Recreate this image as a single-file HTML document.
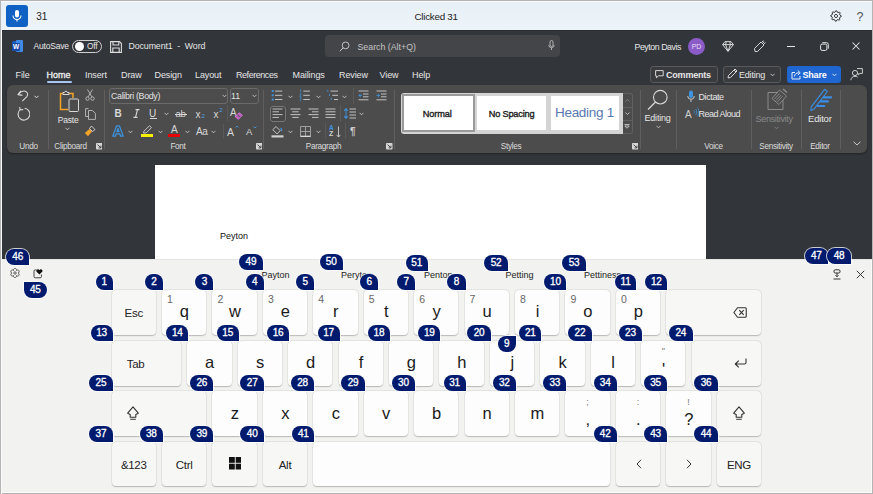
<!DOCTYPE html>
<html><head><meta charset="utf-8">
<style>
*{margin:0;padding:0;box-sizing:border-box}
html,body{width:873px;height:494px;overflow:hidden;background:#b4b4b4}
body{position:relative;font-family:"Liberation Sans",sans-serif}
.a{position:absolute;white-space:nowrap}
#topbar{position:absolute;left:1px;top:1px;width:871px;height:28.7px;background:linear-gradient(#e8f0f7,#ecf3f9);box-shadow:inset 0 1px 0 #f8fafc}
#word{position:absolute;left:2px;top:29.7px;width:869.7px;height:230px;background:#32353a;border-top:1px solid #2a2d32}
.wt{position:absolute;white-space:nowrap;color:#e6e6e6;font-size:10px;line-height:12px}
#ribbon{position:absolute;left:7px;top:85px;width:860px;height:68px;background:#4c4c4c;border-radius:6px;box-shadow:0 1px 2px rgba(0,0,0,.35)}
.sep{position:absolute;width:1px;background:#5f5f5f}
.gl{position:absolute;color:#dcdcdc;font-size:8.2px;letter-spacing:-0.3px;line-height:10px;white-space:nowrap;transform:translateX(-50%)}
.ic{position:absolute}
#page{position:absolute;left:155px;top:164.5px;width:551px;height:95px;background:#fff}
#kb{position:absolute;left:1px;top:259px;width:871px;height:234px;background:#f2f2f0;border-top:1px solid #e4e4e2;border-left:1px solid #fbfbfb;border-right:1px solid #fbfbfb;border-bottom:1px solid #fbfbfb}
#kbw{position:absolute;left:1px;top:491px;width:871px;height:1px;background:#fafafa}
.k{position:absolute;background:#fdfdfd;border-radius:4px;box-shadow:0 0.8px 1.2px rgba(0,0,0,.22), 0 0 0 0.5px rgba(0,0,0,.06)}
.k.f{background:#f7f7f6}
.k span{position:absolute;white-space:nowrap}
.fn{left:0;right:0;top:16px;text-align:center;font-size:11.5px;line-height:14px;color:#222;letter-spacing:-0.3px}
.hint{left:5px;top:3.3px;font-size:10.5px;line-height:12px;color:#666}
.hint2{left:0;right:0;top:6px;text-align:center;font-size:9px;line-height:10px;color:#777}
.let{left:0.6px;right:0;top:11.7px;text-align:center;font-size:16.5px;line-height:20px;color:#1a1a1a}
.bd{position:absolute;background:#001a6e;color:#fff;font-size:10px;-webkit-text-stroke:0.3px #fff;line-height:15px;text-align:center;border-radius:8px;box-shadow:0 0 0 1px rgba(255,255,255,.75);letter-spacing:-0.2px}
.bd.br{border-bottom-right-radius:0}
.bd.tl{border-top-left-radius:0}
.bd.tr{border-top-right-radius:0}
.sg{position:absolute;font-size:9px;line-height:10px;color:#222;white-space:nowrap}
</style></head><body>
<div class="a" style="left:1px;top:1px;width:1px;height:493px;background:#f8f9fa"></div>
<div id="topbar">
  <div class="a" style="left:5px;top:4px;width:22px;height:22px;background:#0f62c4;border-radius:3px"></div>
  <svg class="ic" style="left:9px;top:8px" width="14" height="14" viewBox="0 0 14 14"><rect x="5" y="1" width="4" height="7.5" rx="2" fill="#fff"/><path d="M3 6.5 a4 4 0 0 0 8 0 M7 10.5 V12.5" fill="none" stroke="#fff" stroke-width="1.1"/></svg>
  <div class="a" style="left:35.2px;top:9.7px;font-size:10px;line-height:12px;color:#222">31</div>
  <div class="a" style="left:413.5px;top:10px;font-size:9.8px;line-height:12px;color:#222;letter-spacing:-0.25px">Clicked 31</div>
  <svg class="ic" style="left:829px;top:9px" width="12" height="12" viewBox="0 0 12 12"><circle cx="6" cy="6" r="1.6" fill="none" stroke="#444" stroke-width="1"/><path d="M5.74 0.81 L6.76 0.86 L7.35 2.23 L8.06 2.57 L9.49 2.15 L10.18 2.90 L9.62 4.29 L9.88 5.03 L11.19 5.74 L11.14 6.76 L9.77 7.35 L9.43 8.06 L9.85 9.49 L9.10 10.18 L7.71 9.62 L6.97 9.88 L6.26 11.19 L5.24 11.14 L4.65 9.77 L3.94 9.43 L2.51 9.85 L1.82 9.10 L2.38 7.71 L2.12 6.97 L0.81 6.26 L0.86 5.24 L2.23 4.65 L2.57 3.94 L2.15 2.51 L2.90 1.82 L4.29 2.38 L5.03 2.12 Z" fill="none" stroke="#333" stroke-width="1" stroke-linejoin="round"/></svg>
  <div class="a" style="left:855.5px;top:9px;font-size:12.5px;line-height:14px;color:#505050">?</div>
</div>
<div id="word"></div>
<div id="wordc" style="position:absolute;left:0;top:0;width:873px;height:259px;overflow:hidden">
  <!-- title row -->
  <div class="a" style="left:12px;top:41px;width:11px;height:10px;background:#1d5bbf;border-radius:1.5px"></div>
  <div class="a" style="left:16px;top:40px;width:7px;height:12px;background:#3f8ae6;border-radius:1px"></div>
  <div class="a" style="left:12px;top:42.5px;width:8px;height:8px;background:#1849a9;border-radius:1px;color:#fff;font-size:6.5px;line-height:8px;font-weight:bold;text-align:center">W</div>
  <div class="wt" style="left:33.5px;top:40px;font-size:8.5px;letter-spacing:-0.2px">AutoSave</div>
  <div class="a" style="left:72px;top:39.5px;width:30px;height:13.5px;border:1px solid #d0d0d0;border-radius:7px"></div>
  <div class="a" style="left:74.5px;top:41.5px;width:9.5px;height:9.5px;background:#fff;border-radius:50%"></div>
  <div class="wt" style="left:87px;top:40px;font-size:8.3px;letter-spacing:-0.2px">Off</div>
  <svg class="ic" style="left:109.5px;top:40.5px" width="12" height="12" viewBox="0 0 12 12"><path d="M0.6 0.6 H9.5 L11.4 2.5 V11.4 H0.6 Z" fill="none" stroke="#ddd" stroke-width="1.1"/><path d="M3 0.8 V4 H8.8 V0.8 M2.8 11.2 V7 H9.2 V11.2" fill="none" stroke="#ddd" stroke-width="1.1"/></svg>
  <div class="wt" style="left:128.5px;top:40px;font-size:8.8px;letter-spacing:-0.1px">Document1&nbsp; -&nbsp; Word</div>
  <!-- search -->
  <div class="a" style="left:325px;top:34.5px;width:235px;height:22px;background:#444549;border-radius:4px"></div>
  <svg class="ic" style="left:338.5px;top:41px" width="11" height="11" viewBox="0 0 11 11"><circle cx="6.6" cy="4.4" r="3.4" fill="none" stroke="#cfcfcf" stroke-width="0.9"/><path d="M4.2 6.8 L0.8 10.2" stroke="#cfcfcf" stroke-width="1"/></svg>
  <div class="wt" style="left:357.5px;top:40.8px;font-size:8.8px;color:#c4c4c4;letter-spacing:0px">Search (Alt+Q)</div>
  <svg class="ic" style="left:547.5px;top:40px" width="7" height="11" viewBox="0 0 7 11"><rect x="2" y="0.5" width="3" height="6" rx="1.5" fill="none" stroke="#bbb" stroke-width="0.9"/><path d="M0.8 5 a2.7 2.7 0 0 0 5.4 0 M3.5 7.8 V10" fill="none" stroke="#bbb" stroke-width="0.9"/></svg>
  <!-- right title -->
  <div class="wt" style="left:634.5px;top:40.5px;font-size:8.8px;letter-spacing:-0.45px">Peyton Davis</div>
  <div class="a" style="left:688px;top:37.5px;width:17px;height:17px;background:#8b5cc7;border-radius:50%;color:#e8dcf5;font-size:7px;line-height:17px;text-align:center">PD</div>
  <svg class="ic" style="left:722px;top:40.5px" width="12" height="11" viewBox="0 0 12 11"><path d="M3 0.6 H9 L11.4 3.6 L6 10.4 L0.6 3.6 Z M0.6 3.6 H11.4 M4.2 0.8 L3.6 3.6 L6 10.2 L8.4 3.6 L7.8 0.8" fill="none" stroke="#e6e6e6" stroke-width="0.9" stroke-linejoin="round"/></svg>
  <svg class="ic" style="left:752.5px;top:39.5px" width="13" height="13" viewBox="0 0 13 13"><path d="M2 11.5 L1.5 8.5 L8 2 L11 5 L4.5 11.5 Z M9 1 L12 4" fill="none" stroke="#e6e6e6" stroke-width="0.9" stroke-linejoin="round"/><path d="M10.5 0.5 L11 1.5 M12 2 L12.5 2.5" stroke="#e6e6e6" stroke-width="0.8"/></svg>
  <div class="a" style="left:787px;top:45.5px;width:8px;height:1px;background:#e6e6e6"></div>
  <svg class="ic" style="left:819.5px;top:41.5px" width="9" height="9" viewBox="0 0 9 9"><rect x="0.6" y="2.1" width="6.3" height="6.3" rx="1.5" fill="none" stroke="#e6e6e6" stroke-width="1"/><path d="M2.3 0.7 H6.5 a1.8 1.8 0 0 1 1.8 1.8 V6.7" fill="none" stroke="#e6e6e6" stroke-width="1"/></svg>
  <svg class="ic" style="left:852.3px;top:41.8px" width="8" height="8" viewBox="0 0 8 8"><path d="M0.5 0.5 L7.5 7.5 M7.5 0.5 L0.5 7.5" stroke="#e6e6e6" stroke-width="1.05"/></svg>
  <!-- tabs -->
  <div class="wt" style="left:15.5px;top:69px;font-size:9px;letter-spacing:-0.1px">File</div>
  <div class="wt" style="left:46.5px;top:69px;font-size:9px;letter-spacing:0px;-webkit-text-stroke:0.3px #f0f0f0;color:#f0f0f0">Home</div>
  <div class="a" style="left:47px;top:81px;width:25px;height:2px;background:#a9c4ee;border-radius:1px"></div>
  <div class="wt" style="left:85px;top:69px;font-size:9px;letter-spacing:-0.1px">Insert</div>
  <div class="wt" style="left:121px;top:69px;font-size:9px;letter-spacing:-0.1px">Draw</div>
  <div class="wt" style="left:154.5px;top:69px;font-size:9px;letter-spacing:-0.1px">Design</div>
  <div class="wt" style="left:195px;top:69px;font-size:9px;letter-spacing:-0.1px">Layout</div>
  <div class="wt" style="left:236px;top:69px;font-size:9px;letter-spacing:-0.45px">References</div>
  <div class="wt" style="left:292.5px;top:69px;font-size:9px;letter-spacing:-0.1px">Mailings</div>
  <div class="wt" style="left:339px;top:69px;font-size:9px;letter-spacing:-0.1px">Review</div>
  <div class="wt" style="left:379.5px;top:69px;font-size:9px;letter-spacing:-0.1px">View</div>
  <div class="wt" style="left:412px;top:69px;font-size:9px;letter-spacing:-0.1px">Help</div>
  <!-- buttons right -->
  <div class="a" style="left:650px;top:65.5px;width:68px;height:17px;border:1px solid #5a5a5a;background:#3a3b3e;border-radius:3px"></div>
  <svg class="ic" style="left:655px;top:70px" width="9" height="9" viewBox="0 0 9 9"><path d="M0.6 0.6 H8.2 V5.8 H3.6 L1.4 7.8 V5.8 H0.6 Z" fill="none" stroke="#e6e6e6" stroke-width="0.9" stroke-linejoin="round"/></svg>
  <div class="wt" style="left:666px;top:68.5px;font-size:9px;font-weight:bold;letter-spacing:-0.2px">Comments</div>
  <div class="a" style="left:723px;top:65.5px;width:58px;height:17px;border:1px solid #5a5a5a;background:#3a3b3e;border-radius:3px"></div>
  <svg class="ic" style="left:727px;top:68px" width="11" height="11" viewBox="0 0 11 11"><path d="M1 10 L1.5 7.5 L8 1 L10 3 L3.5 9.5 Z M7 2 L9 4" fill="none" stroke="#e6e6e6" stroke-width="0.9" stroke-linejoin="round"/></svg>
  <div class="wt" style="left:739px;top:68.5px;font-size:9px;letter-spacing:-0.2px">Editing</div>
  <svg class="ic" style="left:770px;top:72.5px" width="5" height="4" viewBox="0 0 5 4"><path d="M0.5 0.8 L2.5 2.8 L4.5 0.8" fill="none" stroke="#e6e6e6" stroke-width="0.8"/></svg>
  <div class="a" style="left:787px;top:65.5px;width:54px;height:17px;background:#1f66d1;border-radius:3px"></div>
    <svg class="ic" style="left:791px;top:68.5px" width="11" height="11" viewBox="0 0 11 11"><path d="M4 3.5 H1 V10 H9 V7" fill="none" stroke="#fff" stroke-width="0.9"/><path d="M3.5 7.5 C3.8 4.8 5.5 3.8 8 3.8 M6.8 1.5 L9.2 3.8 L6.8 6" fill="none" stroke="#fff" stroke-width="0.9"/></svg>
  <div class="wt" style="left:802.5px;top:68.5px;font-size:9px;font-weight:bold;color:#fff;letter-spacing:-0.2px">Share</div>
  <svg class="ic" style="left:831.5px;top:72.5px" width="5" height="4" viewBox="0 0 5 4"><path d="M0.5 0.8 L2.5 2.8 L4.5 0.8" fill="none" stroke="#fff" stroke-width="0.8"/></svg>
  <svg class="ic" style="left:849.5px;top:67.5px" width="13" height="13" viewBox="0 0 13 13"><circle cx="5" cy="5" r="2.6" fill="none" stroke="#e0e0e0" stroke-width="0.9"/><path d="M0.8 12.2 C1.2 9.4 3 8.3 5 8.3 C6.2 8.3 7 8.6 7.7 9.2 M7 0.6 H12.4 V5.4 H10 L8.5 6.7 V5.4" fill="none" stroke="#e0e0e0" stroke-width="0.9" stroke-linejoin="round"/></svg>
</div>

<div id="ribbon"></div>
<div id="rib" style="position:absolute;left:0;top:0;width:873px;height:259px;overflow:hidden">
  <!-- separators -->
  <div class="sep" style="left:47.5px;top:90px;height:59px"></div>
  <div class="sep" style="left:104px;top:90px;height:59px"></div>
  <div class="sep" style="left:263px;top:90px;height:59px"></div>
  <div class="sep" style="left:394px;top:90px;height:59px"></div>
  <div class="sep" style="left:640px;top:90px;height:59px"></div>
  <div class="sep" style="left:675.5px;top:90px;height:59px"></div>
  <div class="sep" style="left:751px;top:90px;height:59px"></div>
  <div class="sep" style="left:801px;top:90px;height:59px"></div>
  <div class="sep" style="left:840px;top:90px;height:59px"></div>
  <!-- group labels -->
  <div class="gl" style="left:28.5px;top:142.1px">Undo</div>
  <div class="gl" style="left:70.5px;top:142.1px">Clipboard</div>
  <div class="gl" style="left:178px;top:142.1px">Font</div>
  <div class="gl" style="left:323.5px;top:142.1px">Paragraph</div>
  <div class="gl" style="left:511px;top:142.1px">Styles</div>
  <div class="gl" style="left:713.5px;top:142.1px">Voice</div>
  <div class="gl" style="left:776px;top:142.1px">Sensitivity</div>
  <div class="gl" style="left:820px;top:142.1px">Editor</div>
  <!-- launchers -->
  <svg class="ic" style="left:95.5px;top:143px" width="6.5" height="6.5" viewBox="0 0 6.5 6.5"><rect x="0" y="0" width="6.5" height="6.5" rx="0.8" fill="#d6d6d6"/><path d="M1.6 1.6 L4.6 4.6 M4.9 2.6 V4.9 H2.6" fill="none" stroke="#3a3a3a" stroke-width="0.9"/></svg>
  <svg class="ic" style="left:255.5px;top:143px" width="6.5" height="6.5" viewBox="0 0 6.5 6.5"><rect x="0" y="0" width="6.5" height="6.5" rx="0.8" fill="#d6d6d6"/><path d="M1.6 1.6 L4.6 4.6 M4.9 2.6 V4.9 H2.6" fill="none" stroke="#3a3a3a" stroke-width="0.9"/></svg>
  <svg class="ic" style="left:386.0px;top:143px" width="6.5" height="6.5" viewBox="0 0 6.5 6.5"><rect x="0" y="0" width="6.5" height="6.5" rx="0.8" fill="#d6d6d6"/><path d="M1.6 1.6 L4.6 4.6 M4.9 2.6 V4.9 H2.6" fill="none" stroke="#3a3a3a" stroke-width="0.9"/></svg>
  <svg class="ic" style="left:631.5px;top:143px" width="6.5" height="6.5" viewBox="0 0 6.5 6.5"><rect x="0" y="0" width="6.5" height="6.5" rx="0.8" fill="#d6d6d6"/><path d="M1.6 1.6 L4.6 4.6 M4.9 2.6 V4.9 H2.6" fill="none" stroke="#3a3a3a" stroke-width="0.9"/></svg>
  <!-- undo group -->
  <svg class="ic" style="left:16px;top:88px" width="14" height="14" viewBox="0 0 14 14"><path d="M2.4 6.3 C4.6 3.6 7 2.6 9.2 3.2 C11.6 3.9 12.4 6.6 10.8 8.6 L6.3 13.2" fill="none" stroke="#d8d8d8" stroke-width="1.1"/><path d="M4.9 2.9 L2 6.6 L6.4 7.4" fill="none" stroke="#d8d8d8" stroke-width="1.1" stroke-linejoin="round"/></svg>
  <svg class="ic" style="left:33.5px;top:94.5px" width="5" height="4" viewBox="0 0 5 4"><path d="M0.5 0.8 L2.5 2.8 L4.5 0.8" fill="none" stroke="#e0e0e0" stroke-width="1"/></svg>
  <svg class="ic" style="left:16px;top:106px" width="14" height="15" viewBox="0 0 14 15"><path d="M4.2 3.6 A5.9 5.9 0 1 0 8.6 2.3" fill="none" stroke="#d8d8d8" stroke-width="1.1"/><path d="M3.6 1 L4.2 3.8 L7.2 3.6" fill="none" stroke="#d8d8d8" stroke-width="1.1" stroke-linejoin="round"/></svg>
  <!-- clipboard -->
  <svg class="ic" style="left:59px;top:90px" width="21" height="23" viewBox="0 0 21 23"><path d="M4 3.5 H1.5 V19.5 H9" fill="none" stroke="#f0a42a" stroke-width="1.5"/><path d="M10 3.5 H14 V8" fill="none" stroke="#f0a42a" stroke-width="1.5"/><path d="M4 4.5 V2.5 H5.5 C5.5 0.8 8.5 0.8 8.5 2.5 H10 V4.5 Z" fill="none" stroke="#d8d8d8" stroke-width="1"/><rect x="10" y="9" width="9.5" height="12.5" rx="1" fill="#4c4c4c" stroke="#d8d8d8" stroke-width="1"/></svg>
  <div class="wt" style="left:57.8px;top:114px;font-size:8.5px;letter-spacing:-0.2px">Paste</div>
  <svg class="ic" style="left:64.5px;top:127px" width="5" height="4" viewBox="0 0 5 4"><path d="M0.5 0.8 L2.5 2.8 L4.5 0.8" fill="none" stroke="#d8d8d8" stroke-width="0.8"/></svg>
  <svg class="ic" style="left:85px;top:88.5px" width="10" height="12" viewBox="0 0 10 12"><path d="M2.5 0.5 L7 8 M7.5 0.5 L3 8" fill="none" stroke="#bdbdbd" stroke-width="0.9"/><circle cx="2.5" cy="9.6" r="1.7" fill="none" stroke="#bdbdbd" stroke-width="0.9"/><circle cx="7.5" cy="9.6" r="1.7" fill="none" stroke="#bdbdbd" stroke-width="0.9"/></svg>
  <svg class="ic" style="left:85px;top:107.5px" width="11" height="12" viewBox="0 0 11 12"><path d="M3.5 0.6 H0.6 V8.5 H3.5" fill="none" stroke="#bdbdbd" stroke-width="0.9"/><path d="M3.5 2.5 H7.5 L10.4 5.4 V11.4 H3.5 Z" fill="none" stroke="#bdbdbd" stroke-width="0.9"/></svg>
  <svg class="ic" style="left:84px;top:125px" width="12" height="12" viewBox="0 0 12 12"><path d="M7.5 1 L11 4.5 L8.5 6.5 L5.5 3.5 Z" fill="none" stroke="#d8d8d8" stroke-width="0.9"/><path d="M5.5 4 L8 6.5 L4 11.2 L0.8 8 Z" fill="#f0a42a"/></svg>
  <!-- font -->
  <div class="a" style="left:109px;top:88px;width:119px;height:16px;border:1px solid #6a6a6a;border-radius:3px"></div>
  <div class="wt" style="left:111px;top:90px;font-size:8.8px;letter-spacing:-0.3px;color:#e2e2e2">Calibri (Body)</div>
  <svg class="ic" style="left:221.5px;top:94px" width="5" height="4" viewBox="0 0 5 4"><path d="M0.5 0.8 L2.5 2.8 L4.5 0.8" fill="none" stroke="#d8d8d8" stroke-width="0.8"/></svg>
  <div class="a" style="left:229.5px;top:88px;width:29px;height:16px;border:1px solid #6a6a6a;border-radius:3px"></div>
  <div class="wt" style="left:231px;top:90px;font-size:8.8px;color:#e2e2e2">11</div>
  <svg class="ic" style="left:252px;top:94px" width="5" height="4" viewBox="0 0 5 4"><path d="M0.5 0.8 L2.5 2.8 L4.5 0.8" fill="none" stroke="#d8d8d8" stroke-width="0.8"/></svg>
  <div class="wt" style="left:114.5px;top:107.5px;font-size:10px;font-weight:bold;color:#d8d8d8">B</div>
  <svg class="ic" style="left:132.5px;top:108.5px" width="7" height="9" viewBox="0 0 7 9"><path d="M2.5 0.6 H6.5 M0.5 8.4 H4.5 M4.5 0.6 L2.5 8.4" fill="none" stroke="#d8d8d8" stroke-width="1.1"/></svg>
  <div class="wt" style="left:149px;top:107.5px;font-size:10px;color:#d8d8d8">U</div>
  <div class="a" style="left:149.5px;top:118px;width:7px;height:1px;background:#d8d8d8"></div>
  <svg class="ic" style="left:164px;top:112px" width="5" height="4" viewBox="0 0 5 4"><path d="M0.5 0.8 L2.5 2.8 L4.5 0.8" fill="none" stroke="#d8d8d8" stroke-width="0.8"/></svg>
  <div class="wt" style="left:175.5px;top:107.5px;font-size:9.5px;color:#d8d8d8;letter-spacing:-0.4px">ab</div>
  <div class="a" style="left:175px;top:113.5px;width:12px;height:1px;background:#d8d8d8"></div>
  <div class="wt" style="left:195.5px;top:108.5px;font-size:10px;color:#d8d8d8">x</div>
  <div class="wt" style="left:201.5px;top:113px;font-size:6px;line-height:7px;color:#4aa0e6">2</div>
  <div class="wt" style="left:213.5px;top:108.5px;font-size:10px;color:#d8d8d8">x</div>
  <div class="wt" style="left:219.2px;top:106.5px;font-size:6px;line-height:7px;color:#4aa0e6">2</div>
  <div class="a" style="left:226.5px;top:105px;width:1px;height:16px;background:#5a5a5a"></div>
  <div class="wt" style="left:229.8px;top:106px;font-size:11.5px;line-height:13px;color:#d8d8d8;transform:scaleX(0.85);transform-origin:left">A</div>
  <svg class="ic" style="left:233.5px;top:111.5px" width="9" height="8" viewBox="0 0 9 8"><path d="M5.2 0.8 L8.3 3.3 L4.4 7.3 L1 4.6 Z" fill="#b75bb7" stroke="#e07ae0" stroke-width="0.9" stroke-linejoin="round"/><path d="M3.2 2.7 L6.3 5.3" stroke="#4c4c4c" stroke-width="0.8"/></svg>
  <svg class="ic" style="left:112px;top:125px" width="12" height="12" viewBox="0 0 12 12"><path d="M4.6 0.8 H7.4 L11.2 11.2 H8.6 L7.8 8.8 H4.2 L3.4 11.2 H0.8 Z M5 6.6 H7 L6 3.4 Z" fill="#4c4c4c" stroke="#3d95e0" stroke-width="1.2" stroke-linejoin="round" fill-rule="evenodd"/></svg>
  <svg class="ic" style="left:127.5px;top:129.5px" width="5" height="4" viewBox="0 0 5 4"><path d="M0.5 0.8 L2.5 2.8 L4.5 0.8" fill="none" stroke="#d8d8d8" stroke-width="0.8"/></svg>
  <svg class="ic" style="left:142px;top:125px" width="11" height="9" viewBox="0 0 11 9"><path d="M1.5 8 L2 6 L7.5 0.8 L9.5 2.6 L4 8 Z" fill="none" stroke="#cfcfcf" stroke-width="0.9"/></svg>
  <div class="a" style="left:141px;top:134px;width:11.5px;height:3px;background:#f4f000"></div>
  <svg class="ic" style="left:157.5px;top:129.5px" width="5" height="4" viewBox="0 0 5 4"><path d="M0.5 0.8 L2.5 2.8 L4.5 0.8" fill="none" stroke="#d8d8d8" stroke-width="0.8"/></svg>
  <div class="wt" style="left:171px;top:123.5px;font-size:10px;color:#d8d8d8">A</div>
  <div class="a" style="left:168px;top:134px;width:12px;height:3px;background:#e60000"></div>
  <svg class="ic" style="left:185px;top:129.5px" width="5" height="4" viewBox="0 0 5 4"><path d="M0.5 0.8 L2.5 2.8 L4.5 0.8" fill="none" stroke="#d8d8d8" stroke-width="0.8"/></svg>
  <div class="wt" style="left:196px;top:126px;font-size:10px;color:#d8d8d8;letter-spacing:-0.5px">Aa</div>
  <svg class="ic" style="left:211px;top:129.5px" width="5" height="4" viewBox="0 0 5 4"><path d="M0.5 0.8 L2.5 2.8 L4.5 0.8" fill="none" stroke="#d8d8d8" stroke-width="0.8"/></svg>
  <div class="a" style="left:222.5px;top:123.5px;width:1px;height:15px;background:#5a5a5a"></div>
  <div class="wt" style="left:227px;top:125.5px;font-size:10.5px;color:#d8d8d8">A</div>
  <svg class="ic" style="left:235px;top:125px" width="4" height="3" viewBox="0 0 4 3"><path d="M0.5 2.5 L2 1 L3.5 2.5" fill="none" stroke="#4aa0e6" stroke-width="0.8"/></svg>
  <div class="wt" style="left:246px;top:126px;font-size:9.5px;color:#d8d8d8">A</div>
  <svg class="ic" style="left:252.5px;top:125.5px" width="4" height="3" viewBox="0 0 4 3"><path d="M0.5 0.5 L2 2 L3.5 0.5" fill="none" stroke="#4aa0e6" stroke-width="0.8"/></svg>
  <!-- paragraph -->
  <svg class="ic" style="left:271px;top:89px" width="13" height="13" viewBox="0 0 13 13"><rect x="0.7" y="1.1" width="2" height="2" fill="#3d95e0"/><rect x="0.7" y="5.3" width="2" height="2" fill="#3d95e0"/><rect x="0.7" y="9.5" width="2" height="2" fill="#3d95e0"/><path d="M4 2.1 H11.3 M4 6.3 H11.3 M4 10.5 H11.3" stroke="#d0d0d0" stroke-width="0.9"/></svg>
  <svg class="ic" style="left:287.5px;top:94.5px" width="5" height="4" viewBox="0 0 5 4"><path d="M0.5 0.8 L2.5 2.8 L4.5 0.8" fill="none" stroke="#d8d8d8" stroke-width="0.8"/></svg>
  <svg class="ic" style="left:299px;top:89px" width="12" height="13" viewBox="0 0 12 13"><path d="M1 0.8 L1.6 0.5 V3.3 M0.6 4.8 H2.2 L0.7 7.4 H2.3 M0.7 8.8 H2.2 L1.3 10 L2.3 11 L1.4 11.8 H0.6" fill="none" stroke="#3d95e0" stroke-width="0.7"/><path d="M4.3 2.1 H10.8 M4.3 6.3 H10.8 M4.3 10.5 H10.8" stroke="#d0d0d0" stroke-width="0.9"/></svg>
  <svg class="ic" style="left:315.5px;top:94.5px" width="5" height="4" viewBox="0 0 5 4"><path d="M0.5 0.8 L2.5 2.8 L4.5 0.8" fill="none" stroke="#d8d8d8" stroke-width="0.8"/></svg>
  <svg class="ic" style="left:327px;top:89px" width="12" height="13" viewBox="0 0 12 13"><path d="M0.8 0.8 V3 M2.5 4.8 V7 M4.3 8.8 V11" stroke="#3d95e0" stroke-width="0.8"/><path d="M3.5 2.1 H11 M5.3 6.3 H11 M7 10.5 H11" stroke="#d0d0d0" stroke-width="0.9"/></svg>
  <svg class="ic" style="left:341.5px;top:94.5px" width="5" height="4" viewBox="0 0 5 4"><path d="M0.5 0.8 L2.5 2.8 L4.5 0.8" fill="none" stroke="#d8d8d8" stroke-width="0.8"/></svg>
  <div class="a" style="left:353px;top:88px;width:1px;height:16px;background:#5a5a5a"></div>
  <svg class="ic" style="left:357.5px;top:89.5px" width="11" height="11" viewBox="0 0 11 11"><path d="M0.5 1 H10.5 M5 4 H10.5 M5 6.8 H10.5 M0.5 9.8 H10.5" stroke="#d0d0d0" stroke-width="0.9"/><path d="M4 5.4 H1 M2.6 3.8 L1 5.4 L2.6 7" fill="none" stroke="#3d95e0" stroke-width="0.9"/></svg>
  <svg class="ic" style="left:375.5px;top:89.5px" width="11" height="11" viewBox="0 0 11 11"><path d="M0.5 1 H10.5 M5 4 H10.5 M5 6.8 H10.5 M0.5 9.8 H10.5" stroke="#d0d0d0" stroke-width="0.9"/><path d="M0.5 5.4 H3.5 M1.9 3.8 L3.5 5.4 L1.9 7" fill="none" stroke="#3d95e0" stroke-width="0.9"/></svg>
  <div class="a" style="left:269.5px;top:105.5px;width:16.5px;height:16.5px;border:1px solid #787878;border-radius:3px;background:#474747"></div>
  <svg class="ic" style="left:272px;top:108px" width="11" height="11" viewBox="0 0 11 11"><path d="M0.5 1 H10.5 M0.5 3.8 H7 M0.5 6.6 H10.5 M0.5 9.4 H7" stroke="#d0d0d0" stroke-width="0.9"/></svg>
  <svg class="ic" style="left:289.5px;top:108px" width="11" height="11" viewBox="0 0 11 11"><path d="M0.5 1 H10.5 M2.3 3.8 H8.7 M0.5 6.6 H10.5 M2.3 9.4 H8.7" stroke="#d0d0d0" stroke-width="0.9"/></svg>
  <svg class="ic" style="left:307.5px;top:108px" width="11" height="11" viewBox="0 0 11 11"><path d="M0.5 1 H10.5 M4 3.8 H10.5 M0.5 6.6 H10.5 M4 9.4 H10.5" stroke="#d0d0d0" stroke-width="0.9"/></svg>
  <svg class="ic" style="left:325px;top:108px" width="11" height="11" viewBox="0 0 11 11"><path d="M0.5 1 H10.5 M0.5 3.8 H10.5 M0.5 6.6 H10.5 M0.5 9.4 H10.5" stroke="#d0d0d0" stroke-width="0.9"/></svg>
  <div class="a" style="left:340px;top:105px;width:1px;height:17px;background:#5a5a5a"></div>
  <svg class="ic" style="left:344px;top:108px" width="13" height="11" viewBox="0 0 13 11"><path d="M2 0.8 V10.2" stroke="#3d95e0" stroke-width="0.9"/><path d="M0.3 2.8 L2 0.8 L3.7 2.8 M0.3 8.2 L2 10.2 L3.7 8.2" fill="none" stroke="#3d95e0" stroke-width="1.1"/><path d="M5.5 1 H12 M5.5 4 H12 M5.5 7 H12 M5.5 10 H12" stroke="#d0d0d0" stroke-width="0.9"/></svg>
  <svg class="ic" style="left:359px;top:112px" width="5" height="4" viewBox="0 0 5 4"><path d="M0.5 0.8 L2.5 2.8 L4.5 0.8" fill="none" stroke="#d8d8d8" stroke-width="0.8"/></svg>
  <svg class="ic" style="left:271px;top:125px" width="13" height="13" viewBox="0 0 13 13"><path d="M5 1.5 L9.2 5.7 L6 8.9 L1.8 4.7 Z" fill="none" stroke="#d0d0d0" stroke-width="0.9"/><path d="M9.5 3 C10.6 4 11.2 5 10.6 6.2" fill="none" stroke="#3d95e0" stroke-width="1.2"/><rect x="0.5" y="10.3" width="12" height="2.2" fill="#d0d0d0"/></svg>
  <svg class="ic" style="left:287.5px;top:129.5px" width="5" height="4" viewBox="0 0 5 4"><path d="M0.5 0.8 L2.5 2.8 L4.5 0.8" fill="none" stroke="#d8d8d8" stroke-width="0.8"/></svg>
  <svg class="ic" style="left:299.5px;top:125.5px" width="11" height="11" viewBox="0 0 11 11"><path d="M0.5 0.5 H10.5 V10.5 H0.5 Z M5.5 0.5 V10.5 M0.5 5.5 H10.5" fill="none" stroke="#a8a8a8" stroke-width="0.9"/><path d="M0.5 10.3 H10.5" stroke="#e0e0e0" stroke-width="1.2"/></svg>
  <svg class="ic" style="left:315.5px;top:129.5px" width="5" height="4" viewBox="0 0 5 4"><path d="M0.5 0.8 L2.5 2.8 L4.5 0.8" fill="none" stroke="#d8d8d8" stroke-width="0.8"/></svg>
  <div class="a" style="left:324.5px;top:123px;width:1px;height:16px;background:#5a5a5a"></div>
  <div class="wt" style="left:329px;top:123.5px;font-size:6.5px;line-height:7px;font-weight:bold;color:#3d95e0">A</div>
  <div class="wt" style="left:329px;top:130px;font-size:7px;line-height:8px;font-weight:bold;color:#d0d0d0">Z</div>
  <svg class="ic" style="left:335.5px;top:125.5px" width="5" height="12" viewBox="0 0 5 12"><path d="M2.5 0.5 V11 M0.5 8.8 L2.5 11 L4.5 8.8" fill="none" stroke="#d0d0d0" stroke-width="0.9"/></svg>
  <div class="a" style="left:344.5px;top:123px;width:1px;height:16px;background:#5a5a5a"></div>
  <div class="wt" style="left:350px;top:125.5px;font-size:10px;font-weight:bold;color:#cfcfcf">&#182;</div>
  <!-- styles -->
  <div class="a" style="left:400.5px;top:93px;width:222px;height:40.5px;background:#d4d4d4;border-radius:3px 0 0 3px"></div>
  <div class="a" style="left:402px;top:94px;width:73px;height:37.5px;background:#fff;border:2px solid #9a9a9a"></div>
  <div class="a" style="left:477px;top:95.5px;width:69px;height:34px;background:#fff"></div>
  <div class="a" style="left:550.5px;top:95.5px;width:68.5px;height:34px;background:#fff"></div>
  <div class="a" style="left:622.5px;top:92.8px;width:10.5px;height:41px;background:#4c4c4c;border:1px solid #606060;border-left:none;border-radius:0 3px 3px 0"></div>
  <svg class="ic" style="left:624.5px;top:98.5px" width="5" height="3" viewBox="0 0 5 3"><path d="M0.5 2.5 L2.5 0.5 L4.5 2.5" fill="none" stroke="#888" stroke-width="0.8"/></svg>
  <svg class="ic" style="left:624.5px;top:111.5px" width="5" height="3" viewBox="0 0 5 3"><path d="M0.5 0.5 L2.5 2.5 L4.5 0.5" fill="none" stroke="#d8d8d8" stroke-width="0.8"/></svg>
  <svg class="ic" style="left:624px;top:123.5px" width="6" height="5" viewBox="0 0 6 5"><path d="M0.5 0.5 H5.5 M0.8 2 L3 4.3 L5.2 2 Z" fill="none" stroke="#d8d8d8" stroke-width="0.8"/></svg>
  <div class="a" style="left:622.5px;top:106.5px;width:10px;height:1px;background:#606060"></div>
  <div class="a" style="left:622.5px;top:120px;width:10px;height:1px;background:#606060"></div>
  <div class="wt" style="left:422.8px;top:107.5px;font-size:9.2px;color:#1a1a1a;-webkit-text-stroke:0.35px #1a1a1a;letter-spacing:-0.1px">Normal</div>
  <div class="wt" style="left:488.8px;top:107.5px;font-size:9.2px;color:#1a1a1a;-webkit-text-stroke:0.35px #1a1a1a;letter-spacing:-0.2px">No Spacing</div>
  <div class="wt" style="left:555px;top:105px;font-size:13.5px;line-height:16px;color:#5779b0;letter-spacing:-0.3px">Heading 1</div>
  <!-- editing -->
  <svg class="ic" style="left:647px;top:88.5px" width="22" height="22" viewBox="0 0 22 22"><circle cx="13.3" cy="8.2" r="6.8" fill="none" stroke="#d8d8d8" stroke-width="1.1"/><path d="M8.5 13 L1 20.5" stroke="#d8d8d8" stroke-width="1.2"/></svg>
  <div class="wt" style="left:644.5px;top:112px;font-size:9px;letter-spacing:-0.2px">Editing</div>
  <svg class="ic" style="left:655.5px;top:125px" width="5" height="4" viewBox="0 0 5 4"><path d="M0.5 0.8 L2.5 2.8 L4.5 0.8" fill="none" stroke="#d8d8d8" stroke-width="0.8"/></svg>
  <!-- voice -->
  <svg class="ic" style="left:686.5px;top:90px" width="8" height="13" viewBox="0 0 8 13"><rect x="2" y="0.5" width="4" height="7.5" rx="2" fill="#3d95e0"/><path d="M0.7 6 a3.3 3.3 0 0 0 6.6 0 M4 9.4 V12" fill="none" stroke="#d0d0d0" stroke-width="0.9"/></svg>
  <div class="wt" style="left:698.5px;top:90.5px;font-size:9px;letter-spacing:-0.4px">Dictate</div>
  <div class="wt" style="left:685px;top:109px;font-size:10px;color:#d0d0d0">A</div>
  <svg class="ic" style="left:692.5px;top:107px" width="6" height="10" viewBox="0 0 6 10"><path d="M0.8 3.5 C1.6 4.3 1.6 5.7 0.8 6.5 M2.6 2 C4.2 3.5 4.2 6.5 2.6 8 M4.3 0.6 C6.5 2.8 6.5 7.2 4.3 9.4" fill="none" stroke="#3d95e0" stroke-width="0.8"/></svg>
  <div class="wt" style="left:698.5px;top:107.5px;font-size:9px;letter-spacing:-0.5px">Read Aloud</div>
  <!-- sensitivity -->
  <svg class="ic" style="left:767px;top:88px" width="22" height="23" viewBox="0 0 22 23"><path d="M1 4.5 H11 M1 4.5 V21.5 H16 V12" fill="none" stroke="#8a8a8a" stroke-width="1"/><path d="M12.5 2 L19.5 8 L12 16.5 L5 10.5 Z" fill="none" stroke="#8a8a8a" stroke-width="1"/><path d="M7.5 11 L12.5 5.5 M9 12.5 L14 7 M10.5 13.8 L15.5 8.3" stroke="#8a8a8a" stroke-width="0.9"/><path d="M16 1 L20 4.5" stroke="#8a8a8a" stroke-width="1.6"/></svg>
  <div class="wt" style="left:755.5px;top:112.5px;font-size:9px;letter-spacing:-0.3px;color:#8a8a8a">Sensitivity</div>
  <svg class="ic" style="left:773.5px;top:126px" width="5" height="4" viewBox="0 0 5 4"><path d="M0.5 0.8 L2.5 2.8 L4.5 0.8" fill="none" stroke="#8a8a8a" stroke-width="0.8"/></svg>
  <!-- editor -->
  <svg class="ic" style="left:810px;top:88px" width="23" height="24" viewBox="0 0 23 24"><path d="M13.3 9.3 H21.1 M10.6 13.4 H17.9 M7.8 18 H14.2" stroke="#3a8ee6" stroke-width="2.2" stroke-linecap="round"/><path d="M0.8 22.4 L1.24 18.95 L14.6 1.3 L17.4 3.5 L4.02 21.07 Z" fill="#4c4c4c" stroke="#3a8ee6" stroke-width="1.1" stroke-linejoin="round"/></svg>
  <div class="wt" style="left:808px;top:112.5px;font-size:9.5px;letter-spacing:-0.2px">Editor</div>
  <svg class="ic" style="left:853px;top:141px" width="8" height="5" viewBox="0 0 8 5"><path d="M0.6 0.8 L4 4 L7.4 0.8" fill="none" stroke="#d8d8d8" stroke-width="0.9"/></svg>
</div>

<div id="page">
  <div class="a" style="left:65px;top:66px;font-size:9px;line-height:10px;color:#111">Peyton</div>
</div>
<div id="kb">
  <svg class="ic" style="left:8.3px;top:8.4px" width="10" height="10" viewBox="0 0 10 10"><path d="M7.99 5.00 L8.51 5.25 L8.81 5.54 L9.01 5.85 L9.11 6.18 L9.15 6.51 L9.11 6.83 L9.01 7.13 L8.85 7.41 L8.64 7.65 L8.38 7.84 L8.08 7.97 L7.74 8.04 L7.37 8.03 L6.97 7.92 L6.49 7.59 L6.54 8.16 L6.44 8.57 L6.27 8.89 L6.04 9.15 L5.77 9.35 L5.47 9.48 L5.16 9.54 L4.84 9.54 L4.53 9.48 L4.23 9.35 L3.96 9.15 L3.73 8.89 L3.56 8.57 L3.46 8.16 L3.51 7.59 L3.03 7.92 L2.63 8.03 L2.26 8.04 L1.92 7.97 L1.62 7.84 L1.36 7.65 L1.15 7.41 L0.99 7.13 L0.89 6.83 L0.85 6.51 L0.89 6.18 L0.99 5.85 L1.19 5.54 L1.49 5.25 L2.01 5.00 L1.49 4.75 L1.19 4.46 L0.99 4.15 L0.89 3.82 L0.85 3.49 L0.89 3.17 L0.99 2.87 L1.15 2.59 L1.36 2.35 L1.62 2.16 L1.92 2.03 L2.26 1.96 L2.63 1.97 L3.03 2.08 L3.51 2.41 L3.46 1.84 L3.56 1.43 L3.73 1.11 L3.96 0.85 L4.23 0.65 L4.53 0.52 L4.84 0.46 L5.16 0.46 L5.47 0.52 L5.77 0.65 L6.04 0.85 L6.27 1.11 L6.44 1.43 L6.54 1.84 L6.49 2.41 L6.97 2.08 L7.37 1.97 L7.74 1.96 L8.08 2.03 L8.38 2.16 L8.64 2.35 L8.85 2.59 L9.01 2.87 L9.11 3.17 L9.15 3.49 L9.11 3.82 L9.01 4.15 L8.81 4.46 L8.51 4.75 Z" fill="none" stroke="#3a3a3a" stroke-width="0.85" stroke-linejoin="round"/><circle cx="5" cy="5" r="1.2" fill="none" stroke="#3a3a3a" stroke-width="0.8"/></svg>
  <svg class="ic" style="left:30.8px;top:9px" width="10" height="10" viewBox="0 0 10 10"><path d="M3.5 0.9 H2.2 a1.2 1.2 0 0 0 -1.2 1.2 V7.6 a1.2 1.2 0 0 0 1.2 1.2 H7.2 a1.2 1.2 0 0 0 1.2 -1.2 V5.5" fill="none" stroke="#333" stroke-width="0.9"/><path d="M6.4 5.6 L3.6 2.8 A1.45 1.45 0 0 1 6.4 1.2 A1.45 1.45 0 0 1 9.2 2.8 Z" fill="#111"/></svg>
  <div class="sg" style="left:259.5px;top:10px">Payton</div>
  <div class="sg" style="left:339px;top:10px">Peryton</div>
  <div class="sg" style="left:422px;top:10px">Penton</div>
  <div class="sg" style="left:503.5px;top:10px">Petting</div>
  <div class="sg" style="left:582px;top:10px">Pettiness</div>
  <svg class="ic" style="left:829px;top:9px" width="12" height="11" viewBox="0 0 12 11"><rect x="3" y="0.8" width="6" height="3.2" rx="1.2" fill="none" stroke="#333" stroke-width="1"/><path d="M6 4 V7.5 M4.5 6.3 L6 7.8 L7.5 6.3 M2.5 10 H9.5" fill="none" stroke="#333" stroke-width="1"/></svg>
  <svg class="ic" style="left:853.5px;top:10px" width="9" height="9" viewBox="0 0 9 9"><path d="M0.8 0.8 L8.2 8.2 M8.2 0.8 L0.8 8.2" stroke="#333" stroke-width="1"/></svg>
</div>

<div id="keys" style="position:absolute;left:0;top:0;width:873px;height:494px">
<div class="k f" style="left:111.60px;top:289.80px;width:44.30px;height:44.80px"><span class="fn">Esc</span></div>
<div class="k" style="left:162.03px;top:289.80px;width:44.30px;height:44.80px"><span class="hint">1</span><span class="let">q</span></div>
<div class="k" style="left:212.46px;top:289.80px;width:44.30px;height:44.80px"><span class="hint">2</span><span class="let">w</span></div>
<div class="k" style="left:262.89px;top:289.80px;width:44.30px;height:44.80px"><span class="hint">3</span><span class="let">e</span></div>
<div class="k" style="left:313.32px;top:289.80px;width:44.30px;height:44.80px"><span class="hint">4</span><span class="let">r</span></div>
<div class="k" style="left:363.75px;top:289.80px;width:44.30px;height:44.80px"><span class="hint">5</span><span class="let">t</span></div>
<div class="k" style="left:414.18px;top:289.80px;width:44.30px;height:44.80px"><span class="hint">6</span><span class="let">y</span></div>
<div class="k" style="left:464.61px;top:289.80px;width:44.30px;height:44.80px"><span class="hint">7</span><span class="let">u</span></div>
<div class="k" style="left:515.04px;top:289.80px;width:44.30px;height:44.80px"><span class="hint">8</span><span class="let">i</span></div>
<div class="k" style="left:565.47px;top:289.80px;width:44.30px;height:44.80px"><span class="hint">9</span><span class="let">o</span></div>
<div class="k" style="left:615.90px;top:289.80px;width:44.30px;height:44.80px"><span class="hint">0</span><span class="let">p</span></div>
<div class="k f" style="left:666.33px;top:289.80px;width:94.73px;height:44.80px"><svg class="ic" style="left:67px;top:17px" width="14" height="11" viewBox="0 0 14 11"><path d="M4.5 0.75 H12.25 a1 1 0 0 1 1 1 V9.25 a1 1 0 0 1 -1 1 H4.5 L0.9 5.5 Z" fill="none" stroke="#333" stroke-width="1.1" stroke-linejoin="round"/><path d="M6.3 3.1 L10.7 7.9 M10.7 3.1 L6.3 7.9" stroke="#333" stroke-width="1.1"/></svg></div>
<div class="k f" style="left:111.60px;top:340.80px;width:69.51px;height:44.80px"><span class="fn" style="left:0;width:48px">Tab</span></div>
<div class="k" style="left:187.25px;top:340.80px;width:44.30px;height:44.80px"><span class="let">a</span></div>
<div class="k" style="left:237.68px;top:340.80px;width:44.30px;height:44.80px"><span class="let">s</span></div>
<div class="k" style="left:288.11px;top:340.80px;width:44.30px;height:44.80px"><span class="let">d</span></div>
<div class="k" style="left:338.53px;top:340.80px;width:44.30px;height:44.80px"><span class="let">f</span></div>
<div class="k" style="left:388.97px;top:340.80px;width:44.30px;height:44.80px"><span class="let">g</span></div>
<div class="k" style="left:439.39px;top:340.80px;width:44.30px;height:44.80px"><span class="let">h</span></div>
<div class="k" style="left:489.83px;top:340.80px;width:44.30px;height:44.80px"><span class="let">j</span></div>
<div class="k" style="left:540.25px;top:340.80px;width:44.30px;height:44.80px"><span class="let">k</span></div>
<div class="k" style="left:590.68px;top:340.80px;width:44.30px;height:44.80px"><span class="let">l</span></div>
<div class="k" style="left:641.12px;top:340.80px;width:44.30px;height:44.80px"><span class="hint2" style="top:5px">"</span><span class="let" style="top:18px">'</span></div>
<div class="k f" style="left:691.55px;top:340.80px;width:69.51px;height:44.80px"><svg class="ic" style="left:42px;top:17px" width="13" height="11" viewBox="0 0 13 11"><path d="M12 0.5 V4.5 a1.5 1.5 0 0 1 -1.5 1.5 H1.5 M4.8 2.6 L1.3 6 L4.8 9.4" fill="none" stroke="#333" stroke-width="1.1" stroke-linejoin="round"/></svg></div>
<div class="k f" style="left:111.60px;top:391.40px;width:94.73px;height:44.80px"><svg class="ic" style="left:15.3px;top:14.7px" width="12" height="15" viewBox="0 0 12 15"><path d="M6 0.8 L11.3 7.2 L8.8 8.6 V11.2 H3.2 V8.6 L0.7 7.2 Z" fill="none" stroke="#333" stroke-width="1.1" stroke-linejoin="round"/><path d="M3.2 13.3 H8.8" stroke="#444" stroke-width="1.1"/></svg></div>
<div class="k" style="left:212.46px;top:391.40px;width:44.30px;height:44.80px"><span class="let">z</span></div>
<div class="k" style="left:262.89px;top:391.40px;width:44.30px;height:44.80px"><span class="let">x</span></div>
<div class="k" style="left:313.32px;top:391.40px;width:44.30px;height:44.80px"><span class="let">c</span></div>
<div class="k" style="left:363.75px;top:391.40px;width:44.30px;height:44.80px"><span class="let">v</span></div>
<div class="k" style="left:414.18px;top:391.40px;width:44.30px;height:44.80px"><span class="let">b</span></div>
<div class="k" style="left:464.61px;top:391.40px;width:44.30px;height:44.80px"><span class="let">n</span></div>
<div class="k" style="left:515.04px;top:391.40px;width:44.30px;height:44.80px"><span class="let">m</span></div>
<div class="k" style="left:565.47px;top:391.40px;width:44.30px;height:44.80px"><span class="hint2">;</span><span class="let" style="top:18px">,</span></div>
<div class="k" style="left:615.90px;top:391.40px;width:44.30px;height:44.80px"><span class="hint2">:</span><span class="let" style="top:18px">.</span></div>
<div class="k" style="left:666.33px;top:391.40px;width:44.30px;height:44.80px"><span class="hint2">!</span><span class="let" style="top:18px">?</span></div>
<div class="k f" style="left:716.76px;top:391.40px;width:44.30px;height:44.80px"><svg class="ic" style="left:16.5px;top:14.7px" width="12" height="15" viewBox="0 0 12 15"><path d="M6 0.8 L11.3 7.2 L8.8 8.6 V11.2 H3.2 V8.6 L0.7 7.2 Z" fill="none" stroke="#333" stroke-width="1.1" stroke-linejoin="round"/><path d="M3.2 13.3 H8.8" stroke="#444" stroke-width="1.1"/></svg></div>
<div class="k f" style="left:111.60px;top:441.60px;width:44.30px;height:44.80px"><span class="fn">&amp;123</span></div>
<div class="k f" style="left:162.03px;top:441.60px;width:44.30px;height:44.80px"><span class="fn">Ctrl</span></div>
<div class="k f" style="left:212.46px;top:441.60px;width:44.30px;height:44.80px"><svg class="ic" style="left:16.3px;top:15.5px" width="12.5" height="12.5" viewBox="0 0 12.5 12.5"><rect x="0" y="0" width="5.8" height="5.8" fill="#111"/><rect x="6.7" y="0" width="5.8" height="5.8" fill="#111"/><rect x="0" y="6.7" width="5.8" height="5.8" fill="#111"/><rect x="6.7" y="6.7" width="5.8" height="5.8" fill="#111"/></svg></div>
<div class="k f" style="left:262.89px;top:441.60px;width:44.30px;height:44.80px"><span class="fn">Alt</span></div>
<div class="k" style="left:313.32px;top:441.60px;width:296.45px;height:44.80px"></div>
<div class="k f" style="left:615.90px;top:441.60px;width:44.30px;height:44.80px"><svg class="ic" style="left:20px;top:17px" width="6" height="10" viewBox="0 0 6 10"><path d="M5 0.8 L1 5 L5 9.2" fill="none" stroke="#333" stroke-width="1"/></svg></div>
<div class="k f" style="left:666.33px;top:441.60px;width:44.30px;height:44.80px"><svg class="ic" style="left:20px;top:17px" width="6" height="10" viewBox="0 0 6 10"><path d="M1 0.8 L5 5 L1 9.2" fill="none" stroke="#333" stroke-width="1"/></svg></div>
<div class="k f" style="left:716.76px;top:441.60px;width:44.30px;height:44.80px"><span class="fn">ENG</span></div>
</div>
<div id="badges" style="position:absolute;left:0;top:0;width:873px;height:494px">
<div class="bd br" style="left:95.80px;top:273.80px;width:16.8px;height:16.0px">1</div>
<div class="bd br" style="left:144.83px;top:273.80px;width:18.2px;height:16.0px">2</div>
<div class="bd br" style="left:195.26px;top:273.80px;width:18.2px;height:16.0px">3</div>
<div class="bd br" style="left:245.69px;top:273.80px;width:18.2px;height:16.0px">4</div>
<div class="bd br" style="left:296.12px;top:273.80px;width:18.2px;height:16.0px">5</div>
<div class="bd br" style="left:360.20px;top:273.80px;width:18.2px;height:16.0px">6</div>
<div class="bd br" style="left:396.98px;top:273.80px;width:18.2px;height:16.0px">7</div>
<div class="bd br" style="left:447.41px;top:273.80px;width:18.2px;height:16.0px">8</div>
<div class="bd br" style="left:544.47px;top:273.80px;width:22.0px;height:16.0px">10</div>
<div class="bd br" style="left:615.30px;top:273.80px;width:20.6px;height:16.0px">11</div>
<div class="bd br" style="left:645.33px;top:273.80px;width:22.0px;height:16.0px">12</div>
<div class="bd tr" style="left:497.60px;top:335.90px;width:18.2px;height:16.0px">9</div>
<div class="bd br" style="left:90.60px;top:324.80px;width:22.0px;height:16.0px">13</div>
<div class="bd br" style="left:166.25px;top:324.80px;width:22.0px;height:16.0px">14</div>
<div class="bd br" style="left:216.68px;top:324.80px;width:22.0px;height:16.0px">15</div>
<div class="bd br" style="left:267.11px;top:324.80px;width:22.0px;height:16.0px">16</div>
<div class="bd br" style="left:317.53px;top:324.80px;width:22.0px;height:16.0px">17</div>
<div class="bd br" style="left:367.97px;top:324.80px;width:22.0px;height:16.0px">18</div>
<div class="bd br" style="left:418.39px;top:324.80px;width:22.0px;height:16.0px">19</div>
<div class="bd br" style="left:467.43px;top:324.80px;width:23.4px;height:16.0px">20</div>
<div class="bd br" style="left:519.25px;top:324.80px;width:22.0px;height:16.0px">21</div>
<div class="bd br" style="left:568.28px;top:324.80px;width:23.4px;height:16.0px">22</div>
<div class="bd br" style="left:618.72px;top:324.80px;width:23.4px;height:16.0px">23</div>
<div class="bd br" style="left:669.15px;top:324.80px;width:23.4px;height:16.0px">24</div>
<div class="bd br" style="left:89.20px;top:375.40px;width:23.4px;height:16.0px">25</div>
<div class="bd br" style="left:190.06px;top:375.40px;width:23.4px;height:16.0px">26</div>
<div class="bd br" style="left:240.49px;top:375.40px;width:23.4px;height:16.0px">27</div>
<div class="bd br" style="left:290.92px;top:375.40px;width:23.4px;height:16.0px">28</div>
<div class="bd br" style="left:341.35px;top:375.40px;width:23.4px;height:16.0px">29</div>
<div class="bd br" style="left:391.78px;top:375.40px;width:23.4px;height:16.0px">30</div>
<div class="bd br" style="left:443.61px;top:375.40px;width:22.0px;height:16.0px">31</div>
<div class="bd br" style="left:492.64px;top:375.40px;width:23.4px;height:16.0px">32</div>
<div class="bd br" style="left:543.07px;top:375.40px;width:23.4px;height:16.0px">33</div>
<div class="bd br" style="left:593.50px;top:375.40px;width:23.4px;height:16.0px">34</div>
<div class="bd br" style="left:643.93px;top:375.40px;width:23.4px;height:16.0px">35</div>
<div class="bd br" style="left:694.36px;top:375.40px;width:23.4px;height:16.0px">36</div>
<div class="bd br" style="left:89.20px;top:425.60px;width:23.4px;height:16.0px">37</div>
<div class="bd br" style="left:139.63px;top:425.60px;width:23.4px;height:16.0px">38</div>
<div class="bd br" style="left:190.06px;top:425.60px;width:23.4px;height:16.0px">39</div>
<div class="bd br" style="left:240.49px;top:425.60px;width:23.4px;height:16.0px">40</div>
<div class="bd br" style="left:292.32px;top:425.60px;width:22.0px;height:16.0px">41</div>
<div class="bd br" style="left:593.50px;top:425.60px;width:23.4px;height:16.0px">42</div>
<div class="bd br" style="left:643.93px;top:425.60px;width:23.4px;height:16.0px">43</div>
<div class="bd br" style="left:694.36px;top:425.60px;width:23.4px;height:16.0px">44</div>
<div class="bd br" style="left:6.00px;top:248.60px;width:23.4px;height:16.0px">46</div>
<div class="bd br" style="left:804.60px;top:248.30px;width:23.4px;height:16.0px">47</div>
<div class="bd br" style="left:827.30px;top:248.30px;width:23.4px;height:16.0px">48</div>
<div class="bd br" style="left:239.20px;top:254.00px;width:23.4px;height:16.0px">49</div>
<div class="bd br" style="left:319.50px;top:254.00px;width:23.4px;height:16.0px">50</div>
<div class="bd br" style="left:405.70px;top:254.60px;width:22.0px;height:16.0px">51</div>
<div class="bd br" style="left:484.40px;top:254.60px;width:23.4px;height:16.0px">52</div>
<div class="bd br" style="left:562.40px;top:254.60px;width:23.4px;height:16.0px">53</div>
<div class="bd tl" style="left:23.60px;top:281.90px;width:23.4px;height:16.0px">45</div>
</div>
</body></html>
